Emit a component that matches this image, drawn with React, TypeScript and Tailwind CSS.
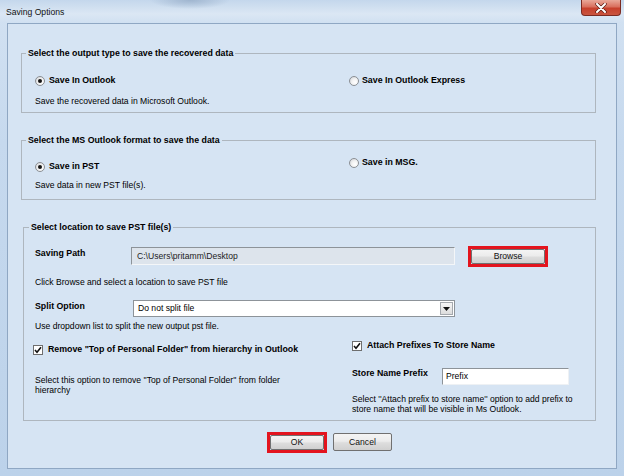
import React from "react";

function Radio({ checked }: { checked?: boolean }) {
  return (
    <span className="flex h-[10px] w-[10px] shrink-0 items-center justify-center rounded-full border border-[#8b8f94] bg-[radial-gradient(circle_at_65%_65%,#ffffff_0%,#f2f2f2_45%,#c9cdd2_100%)]">
      {checked && <span className="h-[4px] w-[4px] rounded-full bg-[#151515]" />}
    </span>
  );
}

function Check() {
  return (
    <span className="flex h-[10px] w-[10px] shrink-0 items-center justify-center border border-[#6e6e6e] bg-white">
      <svg width="8" height="8" viewBox="0 0 8 8">
        <path d="M1 4 L3 6.2 L7 1.2" fill="none" stroke="#111" strokeWidth="1.6" />
      </svg>
    </span>
  );
}

function Btn({ children, className }: { children: React.ReactNode; className?: string }) {
  return (
    <div
      className={
        "flex items-center justify-center rounded-[2px] border border-[#707070] bg-[linear-gradient(180deg,#f4f4f4_0%,#ececec_45%,#dddddd_55%,#d0d0d0_100%)] leading-none text-[#111] " +
        (className ?? "")
      }
    >
      {children}
    </div>
  );
}

export default function App() {
  return (
    <div className="flex h-[476px] w-[624px] flex-col overflow-hidden bg-[linear-gradient(180deg,#d3e2f2_0%,#c6d9ee_30%,#bcd2ea_100%)] font-['Liberation_Sans',Arial,sans-serif] text-[8.6px] text-black">
      {/* Title bar */}
      <div className="flex h-[23px] shrink-0 items-start justify-between bg-[radial-gradient(ellipse_40px_9px_at_190px_0px,#9fb5cf_0%,transparent_100%),linear-gradient(180deg,#c4d7ec_0%,#dbe7f4_60%,#d0e0f1_100%)]">
        <span className="pl-[6px] pt-[6px] text-[8.6px] leading-[12px] text-[#111]">Saving Options</span>
        <div className="mr-[3px] flex h-[16px] w-[40px] items-center justify-center rounded-b-[4px] border border-t-0 border-[#7b2b22] bg-[linear-gradient(180deg,#e9a899_0%,#d9705e_45%,#c7402c_55%,#c9553f_100%)]">
          <svg width="12" height="10" viewBox="0 0 12 10">
            <path d="M2 1 L10 9 M10 1 L2 9" stroke="#5a1c14" strokeWidth="3.4" strokeLinecap="round" />
            <path d="M2 1 L10 9 M10 1 L2 9" stroke="#ffffff" strokeWidth="2" strokeLinecap="round" />
          </svg>
        </div>
      </div>

      {/* Client area */}
      <div className="mx-[7px] mb-[7px] flex flex-1 flex-col border border-[#8fa7c3] bg-[#d6e4f3]">
        {/* Group 1 */}
        <fieldset className="ml-[13px] mt-[23.5px] w-[575px] border border-[#aeb6be]">
          <legend className="ml-[4px] px-[2px] text-[8.8px] font-bold leading-[11px]">
            Select the output type to save the recovered data
          </legend>
          <div className="grid grid-cols-[314px_1fr] pb-[5.5px] pl-[13px] pt-[17px]">
            <div className="flex flex-col">
              <div className="flex h-[11px] items-center gap-[4px]">
                <Radio checked />
                <span className="text-[8.8px] font-bold">Save In Outlook</span>
              </div>
              <div className="mt-[9px] leading-[11px]">Save the recovered data in Microsoft Outlook.</div>
            </div>
            <div className="flex h-[11px] items-center gap-[3px]">
              <Radio />
              <span className="text-[8.8px] font-bold">Save In Outlook Express</span>
            </div>
          </div>
        </fieldset>

        {/* Group 2 */}
        <fieldset className="ml-[13px] mt-[21.5px] w-[575px] border border-[#aeb6be]">
          <legend className="ml-[4px] px-[2px] text-[8.8px] font-bold leading-[11px]">
            Select the MS Outlook format to save the data
          </legend>
          <div className="grid grid-cols-[314px_1fr] pb-[8.5px] pl-[13px] pt-[12px]">
            <div className="flex flex-col pt-[3.5px]">
              <div className="flex h-[11px] items-center gap-[4px]">
                <Radio checked />
                <span className="text-[8.8px] font-bold">Save in PST</span>
              </div>
              <div className="mt-[7.5px] leading-[11px]">Save data in new PST file(s).</div>
            </div>
            <div className="flex h-[11px] items-center gap-[3px]">
              <Radio />
              <span className="text-[8.8px] font-bold">Save in MSG.</span>
            </div>
          </div>
        </fieldset>

        {/* Group 3 */}
        <fieldset className="ml-[15px] mt-[21.5px] w-[573px] border border-[#aeb6be]">
          <legend className="ml-[5px] px-[2px] text-[8.8px] font-bold leading-[11px]">
            Select location to save PST file(s)
          </legend>
          <div className="flex flex-col pb-[6px] pl-[11px] pt-[14.5px]">
            <div className="flex h-[18px] items-start">
              <span className="w-[96px] pt-[0.5px] text-[8.8px] font-bold leading-[11px]">Saving Path</span>
              <div className="flex h-[18px] w-[324px] items-center border border-b-[#f4f6f8] border-l-[#8d9399] border-r-[#f4f6f8] border-t-[#8d9399] bg-[#dde4ec] pl-[5px] text-[#222]">
                {"C:\\Users\\pritamm\\Desktop"}
              </div>
              <div className="ml-[13px] mt-[-1px] h-[21px] w-[80px] border-[3px] border-[#e3141e]">
                <Btn className="h-full w-full">Browse</Btn>
              </div>
            </div>
            <div className="mt-[11.5px] leading-[11px]">Click Browse and select a location to save PST file</div>
            <div className="mt-[12.5px] flex h-[17px] items-start">
              <span className="w-[96px] pt-[0.5px] text-[8.8px] font-bold leading-[11px]">Split Option</span>
              <div className="ml-[2px] flex h-[17px] w-[322px] items-center justify-between border border-[#8d9399] bg-white pl-[4px] pr-[1px]">
                <span>Do not split file</span>
                <div className="flex h-[13px] w-[13px] items-center justify-center border border-[#a5a9ae] bg-[linear-gradient(180deg,#f6f6f6_0%,#dcdcdc_100%)]">
                  <svg width="7" height="4" viewBox="0 0 7 4">
                    <path d="M0 0 H7 L3.5 4 Z" fill="#111" />
                  </svg>
                </div>
              </div>
            </div>
            <div className="mt-[4px] leading-[11px]">Use dropdown list to split the new output pst file.</div>
            <div className="grid grid-cols-[317px_1fr]">
              <div className="flex flex-col pt-[12.5px]">
                <div className="ml-[-2px] flex h-[11px] items-center gap-[5px]">
                  <Check />
                  <span className="text-[8.8px] font-bold">Remove "Top of Personal Folder" from hierarchy in Outlook</span>
                </div>
                <div className="mt-[19.5px] leading-[10px]">
                  Select this option to remove ''Top of Personal Folder'' from folder
                  <br />
                  hierarchy
                </div>
              </div>
              <div className="flex flex-col pt-[8.5px]">
                <div className="flex h-[11px] items-center gap-[5px]">
                  <Check />
                  <span className="text-[8.8px] font-bold">Attach Prefixes To Store Name</span>
                </div>
                <div className="mt-[16.5px] flex h-[17px] items-start">
                  <span className="w-[90px] text-[8.8px] font-bold leading-[11px]">Store Name Prefix</span>
                  <div className="flex h-[17px] w-[127px] items-center border border-b-[#eef1f4] border-l-[#8d9399] border-r-[#eef1f4] border-t-[#8d9399] bg-white pl-[3px]">
                    Prefix
                  </div>
                </div>
                <div className="mt-[9px] leading-[10px]">
                  Select ''Attach prefix to store name'' option to add prefix to
                  <br />
                  store name that will be visible in Ms Outlook.
                </div>
              </div>
            </div>
          </div>
        </fieldset>

        {/* Buttons */}
        <div className="mt-[11px] flex items-start gap-[6px] pl-[259px]">
          <div className="h-[21px] w-[60px] border-[3px] border-[#e3141e]">
            <Btn className="h-full w-full">OK</Btn>
          </div>
          <Btn className="mt-[1px] h-[18px] w-[59px]">Cancel</Btn>
        </div>
      </div>
    </div>
  );
}
